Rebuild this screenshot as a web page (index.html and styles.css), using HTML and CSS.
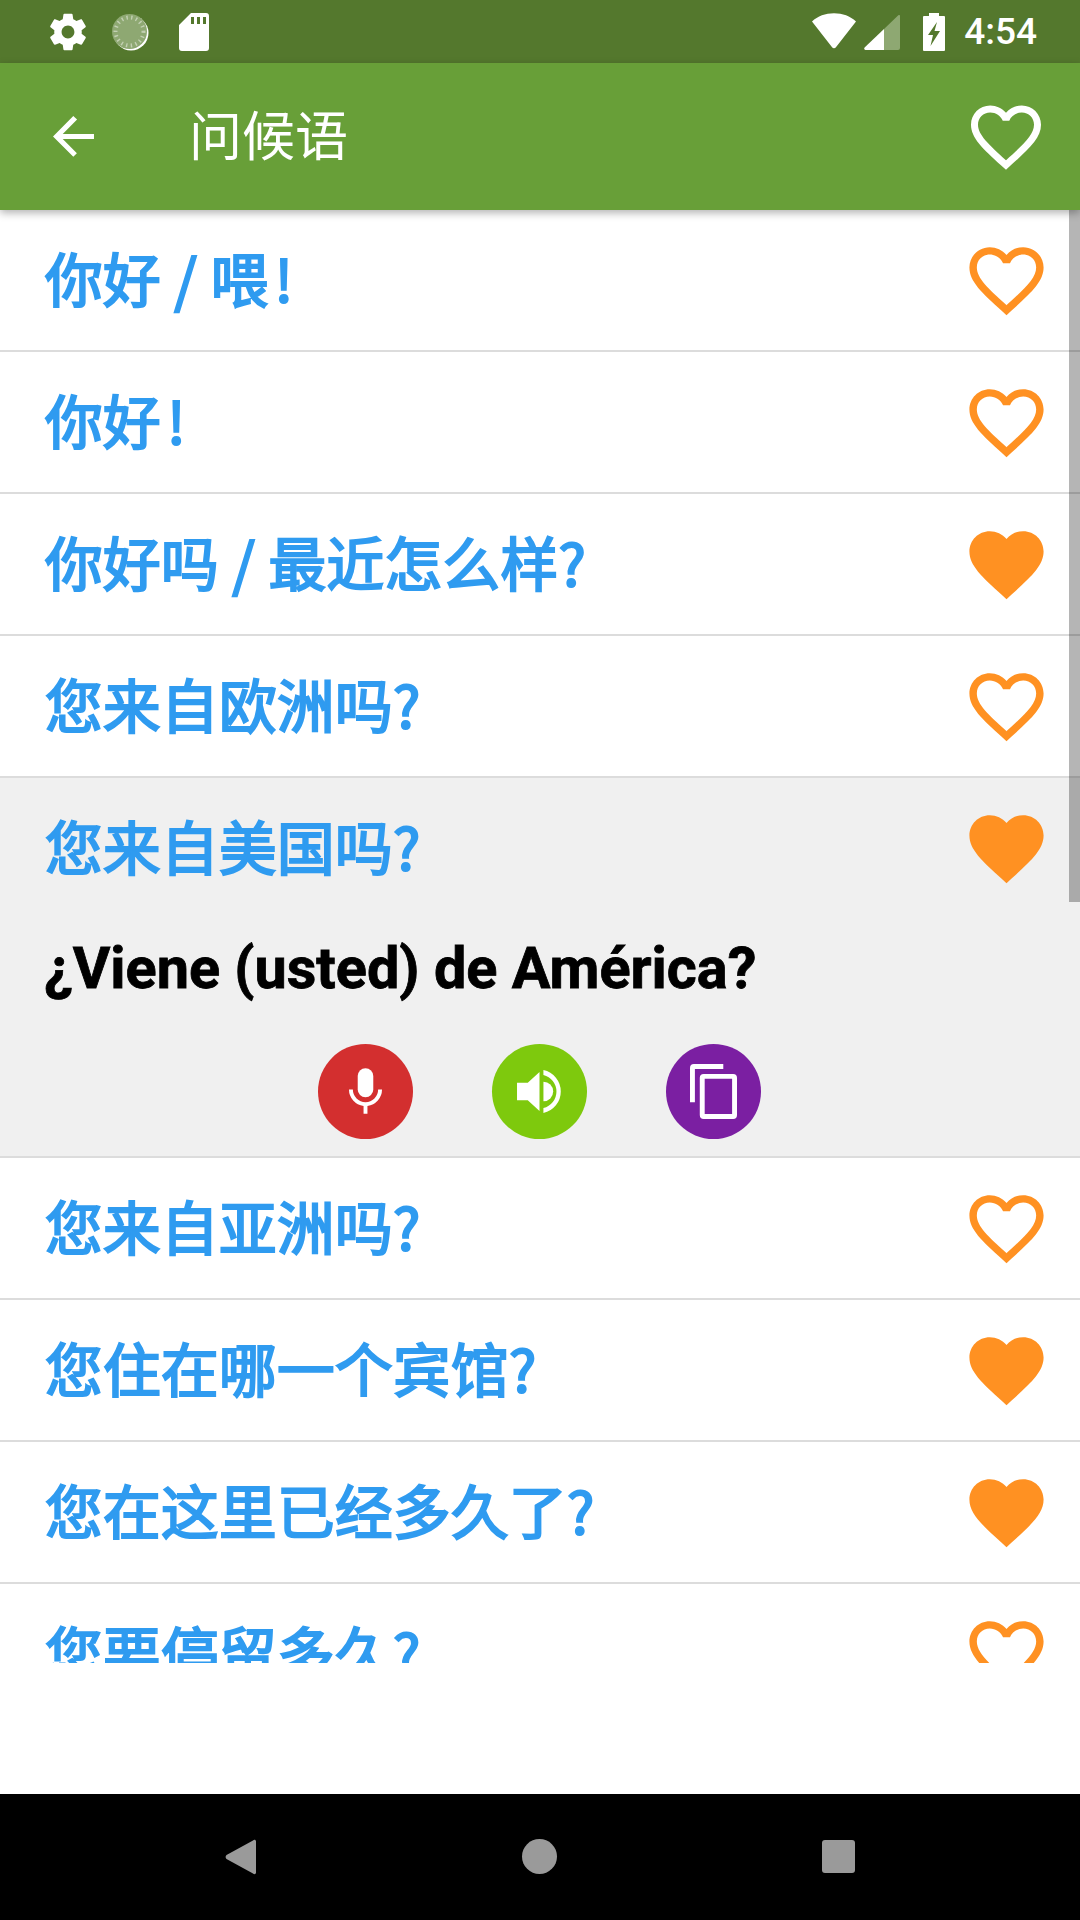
FILE: index.html
```html
<!DOCTYPE html>
<html lang="zh">
<head>
<meta charset="utf-8">
<title>问候语</title>
<link rel="stylesheet" href="styles.css">
</head>
<body>
<svg class="defs" width="0" height="0" aria-hidden="true">
  <symbol id="heart-o" viewBox="0 0 24 24"><path d="M16.5 3c-1.74 0-3.41.81-4.5 2.09C10.91 3.81 9.24 3 7.5 3 4.42 3 2 5.42 2 8.5c0 3.78 3.4 6.86 8.55 11.54L12 21.35l1.45-1.32C18.6 15.36 22 12.28 22 8.5 22 5.42 19.58 3 16.5 3zm-4.4 15.55l-.1.1-.1-.1C7.14 14.24 4 11.39 4 8.5 4 6.5 5.5 5 7.5 5c1.54 0 3.04.99 3.57 2.36h1.87C13.46 5.99 14.96 5 16.5 5c2 0 3.5 1.5 3.5 3.5 0 2.89-3.14 5.74-7.9 10.05z"/></symbol>
  <symbol id="heart-f" viewBox="0 0 24 24"><path d="M12 21.35l-1.45-1.32C5.4 15.36 2 12.28 2 8.5 2 5.42 4.42 3 7.5 3c1.74 0 3.41.81 4.5 2.09C13.09 3.81 14.76 3 16.5 3 19.58 3 22 5.42 22 8.5c0 3.78-3.4 6.86-8.55 11.54L12 21.35z"/></symbol>
</svg>
<div class="screen">
  <header class="status">
    <div class="status-left">
      <svg class="ic-gear" viewBox="0 0 24 24"><path d="M19.43 12.98c.04-.32.07-.64.07-.98s-.03-.66-.07-.98l2.11-1.65c.19-.15.24-.42.12-.64l-2-3.46c-.12-.22-.39-.3-.61-.22l-2.49 1c-.52-.4-1.08-.73-1.69-.98l-.38-2.65C14.46 2.18 14.25 2 14 2h-4c-.25 0-.46.18-.49.42l-.38 2.65c-.61.25-1.17.59-1.69.98l-2.49-1c-.23-.09-.49 0-.61.22l-2 3.46c-.13.22-.07.49.12.64l2.11 1.65c-.04.32-.07.65-.07.98s.03.66.07.98l-2.11 1.65c-.19.15-.24.42-.12.64l2 3.46c.12.22.39.3.61.22l2.49-1c.52.4 1.08.73 1.69.98l.38 2.65c.03.24.24.42.49.42h4c.25 0 .46-.18.49-.42l.38-2.65c.61-.25 1.17-.59 1.69-.98l2.49 1c.23.09.49 0 .61-.22l2-3.46c.12-.22.07-.49-.12-.64l-2.11-1.65zM12 15.5c-1.93 0-3.5-1.57-3.5-3.5s1.57-3.5 3.5-3.5 3.5 1.57 3.5 3.5-1.57 3.5-3.5 3.5z"/></svg>
      <svg class="ic-disc" viewBox="0 0 38 38">
        <circle cx="20" cy="20" r="17.5" fill="#fff"/>
        <circle cx="18.500" cy="18.500" r="17.500" fill="#8ea872"/>
        <circle cx="18.500" cy="18.500" r="14" fill="none" stroke="#c3d0b3" stroke-width="4" stroke-dasharray="1.4 3.4"/>
      </svg>
      <svg class="ic-sd" viewBox="0 0 30 38"><path fill-rule="evenodd" d="M12 0h15a3 3 0 0 1 3 3v32a3 3 0 0 1-3 3H3a3 3 0 0 1-3-3V12zM12 4v7h3V4zM18 4v7h3V4zM24 4v7h3V4z"/></svg>
    </div>
    <div class="status-right">
      <svg class="ic-wifi" viewBox="0 0 46 38"><path d="M23 0C14 0 6 3 0 8.500L21 35.500a2.500 2.500 0 0 0 4 0L46 8.500C40 3 32 0 23 0z"/></svg>
      <svg class="ic-signal" viewBox="0 0 36 36">
        <path class="dim" d="M36 2a1 1 0 0 0-1.700-.7L20 15v21h14a2 2 0 0 0 2-2z"/>
        <path d="M20 15L.6 33.500A1.500 1.500 0 0 0 1.500 36H20z"/>
      </svg>
      <svg class="ic-batt" viewBox="0 0 22 38"><path fill-rule="evenodd" d="M6 0h10v3h5a1 1 0 0 1 1 1v33a1 1 0 0 1-1 1H1a1 1 0 0 1-1-1V4a1 1 0 0 1 1-1h5zM14 9L5 22h5L7.500 33 17 18h-5.500z"/></svg>
      <span class="clock">4:54</span>
    </div>
  </header>
  <div class="toolbar">
    <svg class="ic-back" viewBox="0 0 42 42"><path d="M41 18.500H10.500L24.500 4.500 20.800 1 1 21l19.800 19.800 3.500-3.500L10.500 23.500H41z"/></svg>
    <h1 class="title">问候语</h1>
    <svg class="heart-top"><use href="#heart-o"/></svg>
  </div>
  <main class="list">
    <span class="scrollbar"></span>
    <div class="row"><span class="phrase">你好 / 喂<span class="bang">!</span></span><svg class="heart"><use href="#heart-o"/></svg></div>
    <div class="row"><span class="phrase">你好<span class="bang">!</span></span><svg class="heart"><use href="#heart-o"/></svg></div>
    <div class="row"><span class="phrase">你好吗 / 最近怎么样?</span><svg class="heart"><use href="#heart-f"/></svg></div>
    <div class="row"><span class="phrase">您来自欧洲吗?</span><svg class="heart"><use href="#heart-o"/></svg></div>
    <section class="open">
      <div class="row row-open"><span class="phrase">您来自美国吗?</span><svg class="heart"><use href="#heart-f"/></svg></div>
      <p class="translation">¿Viene (usted) de América?</p>
      <div class="actions">
        <span class="action red"><svg viewBox="0 0 36 48"><path d="M18 0a8 8 0 0 1 8 8v14a8 8 0 0 1-16 0V8a8 8 0 0 1 8-8z"/><path d="M1 22h4a13 13 0 0 0 26 0h4a17 17 0 0 1-15 16.800V47h-4v-8.200A17 17 0 0 1 1 22z"/></svg></span>
        <span class="action green"><svg viewBox="0 0 46 44"><path d="M0 13h11L23 2v40L11 31H0z"/><path d="M27 12a10 10 0 0 1 0 20z"/><path d="M27 0a22.500 22.500 0 0 1 0 44v-5a17.500 17.500 0 0 0 0-34z"/></svg></span>
        <span class="action purple"><svg viewBox="0 0 48 56"><path d="M4 0h30v5H5v34H0V4a4 4 0 0 1 4-4z"/><path fill-rule="evenodd" d="M14 10h30a4 4 0 0 1 4 4v38a4 4 0 0 1-4 4H14a4 4 0 0 1-4-4V14a4 4 0 0 1 4-4zm1 5v36h28V15z"/></svg></span>
      </div>
    </section>
    <div class="row"><span class="phrase">您来自亚洲吗?</span><svg class="heart"><use href="#heart-o"/></svg></div>
    <div class="row"><span class="phrase">您住在哪一个宾馆?</span><svg class="heart"><use href="#heart-f"/></svg></div>
    <div class="row"><span class="phrase">您在这里已经多久了?</span><svg class="heart"><use href="#heart-f"/></svg></div>
    <div class="row"><span class="phrase">您要停留多久?</span><svg class="heart"><use href="#heart-o"/></svg></div>
  </main>
  <div class="spacer"></div>
  <nav class="navbar">
    <svg class="nav-back" viewBox="0 0 32 36"><path d="M28 1.500c1.200-1.300 3-.6 3 1V33.500c0 1.600-1.800 2.300-3 1L1.500 20a3 3 0 0 1 0-4z"/></svg>
    <span class="nav-home"></span>
    <span class="nav-recent"></span>
  </nav>
</div>
</body>
</html>
```
FILE: styles.css
```css
* { box-sizing: border-box; }
html, body { margin: 0; padding: 0; background: #fff; }
.defs { position: absolute; }
.screen {
  width: 1080px;
  height: 1920px;
  display: flex;
  flex-direction: column;
  overflow: hidden;
  font-family: Roboto, "Noto Sans CJK SC", sans-serif;
}
svg { fill: currentColor; display: block; flex: none; }
.status {
  height: 63px;
  background: #54782d;
  color: #fff;
  display: flex;
  justify-content: space-between;
  align-items: center;
  padding: 0 43px 0 46px;
  flex: none;
}
.status-left, .status-right { display: flex; align-items: center; }
.ic-gear { width: 44px; height: 44px; margin-right: 21px; }
.ic-disc { width: 38px; height: 38px; margin-right: 30px; }
.ic-sd { width: 30px; height: 38px; }
.ic-wifi { width: 44px; height: 37px; margin-right: 8px; }
.ic-signal { width: 36px; height: 36px; margin-right: 23px; }
.ic-signal .dim { fill: #8ea872; }
.ic-batt { width: 22px; height: 38px; margin-right: 19px; }
.clock { font-size: 37px; font-weight: 500; }
.toolbar {
  height: 147px;
  background: #689f38;
  color: #fff;
  display: flex;
  align-items: center;
  padding: 0 32px 0 52px;
  box-shadow: 0 3px 8px rgba(0,0,0,.3);
  position: relative;
  z-index: 2;
  flex: none;
}
.ic-back { width: 43px; height: 43px; }
.title {
  margin: 3px 0 0 94px;
  font-size: 53px;
  font-weight: 400;
  flex: 1;
  line-height: 1;
}
.heart-top { width: 84px; height: 84px; }
.list {
  height: 1453px;
  overflow: hidden;
  position: relative;
  flex: none;
}
.scrollbar {
  position: absolute;
  right: 0;
  top: 0;
  width: 11px;
  height: 692px;
  background: rgba(0,0,0,.29);
  z-index: 1;
}
.row {
  height: 142px;
  display: flex;
  align-items: center;
  justify-content: space-between;
  padding: 0 29px 0 45px;
  border-bottom: 2px solid #dcdcdc;
}
.phrase {
  color: #2f9bf0;
  font-family: "Noto Sans CJK SC", sans-serif;
  font-size: 57.6px;
  font-weight: 400;
  -webkit-text-stroke: 2.2px #2f9bf0;
  letter-spacing: .4px;
  line-height: 1;
  padding-bottom: 5px;
}
.bang { margin-left: 6px; }
.heart { width: 89px; height: 89px; color: #ff9122; }
.open {
  background: #f0f0f0;
  border-bottom: 2px solid #dcdcdc;
  height: 380px;
}
.row-open { border-bottom: 0; height: 140px; }
.translation {
  margin: 0;
  padding: 18px 0 0 44px;
  color: #000;
  font-size: 57.6px;
  font-weight: 700;
  -webkit-text-stroke: .8px #000;
  line-height: 66px;
  height: 126px;
}
.actions {
  display: flex;
  justify-content: center;
  gap: 79px;
  padding-right: 1px;
}
.action {
  width: 95px;
  height: 95px;
  border-radius: 50%;
  display: flex;
  align-items: center;
  justify-content: center;
  color: #fff;
}
.red { background: #d32f2f; }
.red svg { width: 35px; height: 47px; }
.green { background: #7ec90d; }
.green svg { width: 45px; height: 43px; }
.purple { background: #7b1fa2; }
.purple svg { width: 47px; height: 55px; }
.spacer { flex: 1; background: #fff; }
.navbar {
  height: 126px;
  background: #000;
  flex: none;
  position: relative;
  display: flex;
  align-items: center;
}
.nav-back { width: 32px; height: 36px; color: #9a9a9a; position: absolute; left: 225px; top: 45px; }
.nav-home { position: absolute; left: 522px; top: 45px; width: 35px; height: 35px; border-radius: 50%; background: #9a9a9a; }
.nav-recent { position: absolute; left: 822px; top: 46px; width: 33px; height: 33px; border-radius: 3px; background: #9a9a9a; }
```
